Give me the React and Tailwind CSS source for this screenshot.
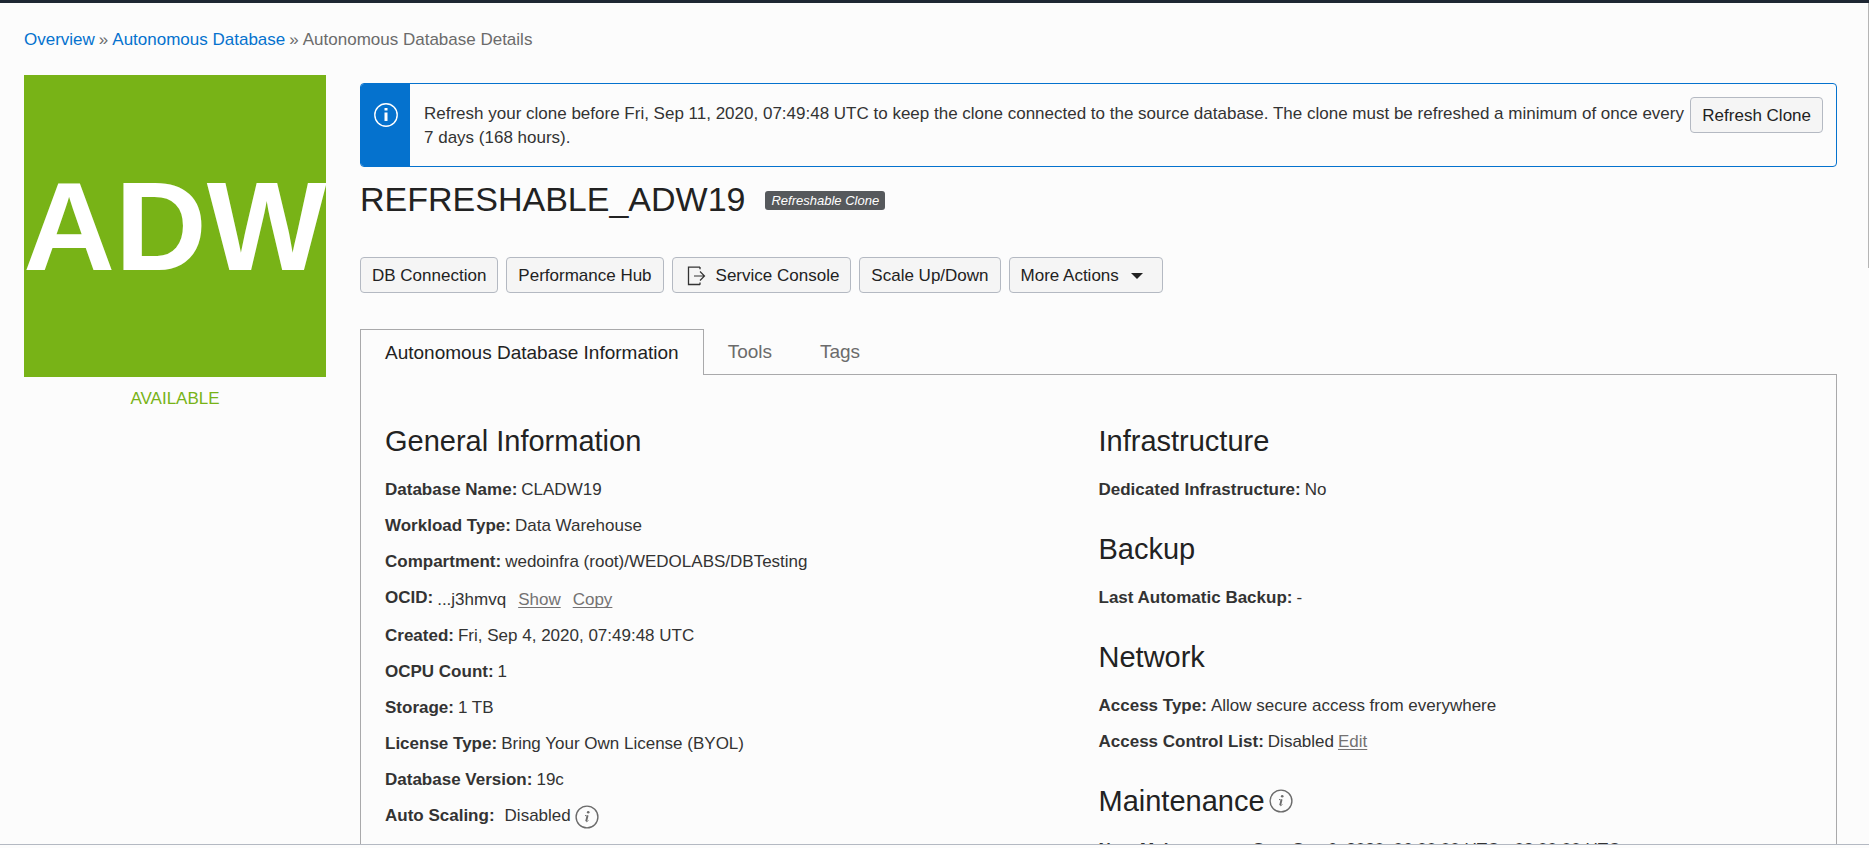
import React from "react";

const button =
  "flex h-9 shrink-0 items-center rounded border border-[#b4b9c2] bg-[#f5f5f5] px-[11px] pt-0.5 text-[17px] leading-6 whitespace-nowrap text-[#222]";
const quietLink = "text-[#747272] underline underline-offset-2 [text-decoration-skip-ink:none]";
const quietTab = "px-6 text-[19px] text-[#6b6b6b]";

function HintIcon() {
  return (
    <svg className="size-6 shrink-0" viewBox="0 0 24 24" fill="none" stroke="#6b6b6b" aria-hidden="true">
      <circle cx="12" cy="12" r="10.9" strokeWidth="1.4" />
      <circle cx="13.2" cy="7.2" r="1.3" fill="#6b6b6b" stroke="none" />
      <path d="M10 10.6h1.2" strokeWidth="1" />
      <path d="M12.6 10.3l-1.4 5.8" strokeWidth="1.9" />
      <path d="M10.9 16.4c.8.5 1.6.1 2.4-.9" strokeWidth="1" />
    </svg>
  );
}

function Row({ label, children }) {
  return (
    <div className="flex h-9 items-start gap-1">
      <dt className="font-bold whitespace-nowrap">{label}:</dt>
      <dd className="flex whitespace-nowrap">{children}</dd>
    </div>
  );
}

function Section({ title, hint, children }) {
  return (
    <section className="mb-[17px]">
      <h2 className="mb-[19px] flex h-9 items-center gap-1 text-[29px] leading-9 text-[#222]">
        {title}
        {hint && <HintIcon />}
      </h2>
      <dl>{children}</dl>
    </section>
  );
}

export default function App() {
  return (
    <div className="flex h-screen flex-col overflow-hidden bg-[#fcfcfc] font-['Liberation_Sans',Arial,sans-serif] text-[17px] leading-6 text-[#333]">
      <header className="h-[3px] shrink-0 bg-[#1e2733]" />
      <div className="flex min-h-0 flex-1 overflow-hidden">
        <div className="min-w-0 flex-1 pt-[25px] pr-[31px] pl-6">
          <nav className="flex gap-1 text-[#6b6b6b]" aria-label="Breadcrumb">
            <a href="#overview" className="text-[#0572ce]">Overview</a>
            <span>»</span>
            <a href="#databases" className="text-[#0572ce]">Autonomous Database</a>
            <span>»</span>
            <span>Autonomous Database Details</span>
          </nav>

          <div className="mt-[23px] flex items-start gap-[34px]">
            <aside className="w-[302px] shrink-0">
              <div className="flex aspect-square items-center justify-center bg-[#78b317] text-[127px] leading-none font-bold text-white">
                ADW
              </div>
              <p className="mt-2.5 text-center text-[#78b317]">AVAILABLE</p>
            </aside>

            <main className="min-w-0 flex-1 pt-2">
              <div className="flex min-h-[84px] overflow-hidden rounded border border-[#0572ce]">
                <div className="flex w-[49px] shrink-0 justify-center bg-[#0572ce] pt-[19px]">
                  <svg className="size-6" viewBox="0 0 24 24" fill="none" stroke="#fff" aria-hidden="true">
                    <circle cx="12" cy="12" r="11.2" strokeWidth="1.4" />
                    <path d="M12 5v2.6M12 9.5v8.5" strokeWidth="3" />
                  </svg>
                </div>
                <p className="min-w-0 flex-1 pt-[18px] pl-3.5">
                  Refresh your clone before Fri, Sep 11, 2020, 07:49:48 UTC to keep the clone connected to the source
                  database. The clone must be refreshed a minimum of once every 7 days (168 hours).
                </p>
                <button type="button" className={`${button} mt-[13px] mr-[13px]`}>Refresh Clone</button>
              </div>

              <div className="mt-3 flex h-10 items-center gap-5">
                <h1 className="text-[34px] leading-10 text-[#222]">REFRESHABLE_ADW19</h1>
                <span className="mt-0.5 rounded-[3px] bg-[#56595c] px-1.5 text-[13px] leading-[19px] text-white italic">
                  Refreshable Clone
                </span>
              </div>

              <div className="mt-[38px] flex gap-2">
                <button type="button" className={button}>DB Connection</button>
                <button type="button" className={button}>Performance Hub</button>
                <button type="button" className={button}>
                  <svg className="mr-2 ml-0.5 h-5 w-[22px]" viewBox="0 0 22 20" fill="none" stroke="#333" aria-hidden="true">
                    <path d="M14 1.2H2.5v17.3H14M14 1v2.2M14 16.5v2.2" strokeWidth="1.3" />
                    <path d="M8 10h10.5M14 5.5l4.5 4.5-4.5 4.5" strokeWidth="1.2" />
                  </svg>
                  Service Console
                </button>
                <button type="button" className={button}>Scale Up/Down</button>
                <button type="button" className={button}>
                  More Actions
                  <svg className="mr-2 ml-3 h-1.5 w-3" viewBox="0 0 12 6" fill="#222" aria-hidden="true">
                    <path d="M0 0h12L6 6z" />
                  </svg>
                </button>
              </div>

              <div className="mt-9 flex" role="tablist">
                <button
                  type="button"
                  role="tab"
                  aria-selected="true"
                  className="h-[46px] border border-b-0 border-[#a9a9ab] px-6 text-[19px] text-[#222]"
                >
                  Autonomous Database Information
                </button>
                <div className="flex flex-1 border-b border-[#a9a9ab]">
                  <button type="button" role="tab" aria-selected="false" className={quietTab}>
                    Tools
                  </button>
                  <button type="button" role="tab" aria-selected="false" className={quietTab}>
                    Tags
                  </button>
                </div>
              </div>

              <div className="grid grid-cols-2 border-x border-[#a9a9ab] px-6 pt-12" role="tabpanel">
                <div>
                  <Section title="General Information">
                    <Row label="Database Name">CLADW19</Row>
                    <Row label="Workload Type">Data Warehouse</Row>
                    <Row label="Compartment">wedoinfra (root)/WEDOLABS/DBTesting</Row>
                    <div className="flex h-[38px] items-start gap-1">
                      <dt className="font-bold">OCID:</dt>
                      <dd className="flex items-start gap-3 pt-0.5">
                        ...j3hmvq
                        <a href="#show" className={quietLink}>Show</a>
                        <a href="#copy" className={quietLink}>Copy</a>
                      </dd>
                    </div>
                    <Row label="Created">Fri, Sep 4, 2020, 07:49:48 UTC</Row>
                    <Row label="OCPU Count">1</Row>
                    <Row label="Storage">1 TB</Row>
                    <Row label="License Type">Bring Your Own License (BYOL)</Row>
                    <Row label="Database Version">19c</Row>
                    <Row label="Auto Scaling">
                      <span className="mr-1 ml-1.5">Disabled</span>
                      <span className="pt-px"><HintIcon /></span>
                    </Row>
                  </Section>
                </div>
                <div>
                  <Section title="Infrastructure">
                    <Row label="Dedicated Infrastructure">No</Row>
                  </Section>
                  <Section title="Backup">
                    <Row label="Last Automatic Backup">-</Row>
                  </Section>
                  <Section title="Network">
                    <Row label="Access Type">Allow secure access from everywhere</Row>
                    <Row label="Access Control List">
                      <span className="mr-1">Disabled</span>
                      <a href="#edit" className={quietLink}>Edit</a>
                    </Row>
                  </Section>
                  <Section title="Maintenance" hint>
                    <Row label="Next Maintenance">Sun, Sep 6, 2020, 06:00:00 UTC - 08:00:00 UTC</Row>
                  </Section>
                </div>
              </div>
            </main>
          </div>
        </div>
        <div className="h-[265px] w-px shrink-0 bg-[#b5b5b5]" />
      </div>
      <footer className="h-1 shrink-0 border-t border-[#b4b9c2]" />
    </div>
  );
}
